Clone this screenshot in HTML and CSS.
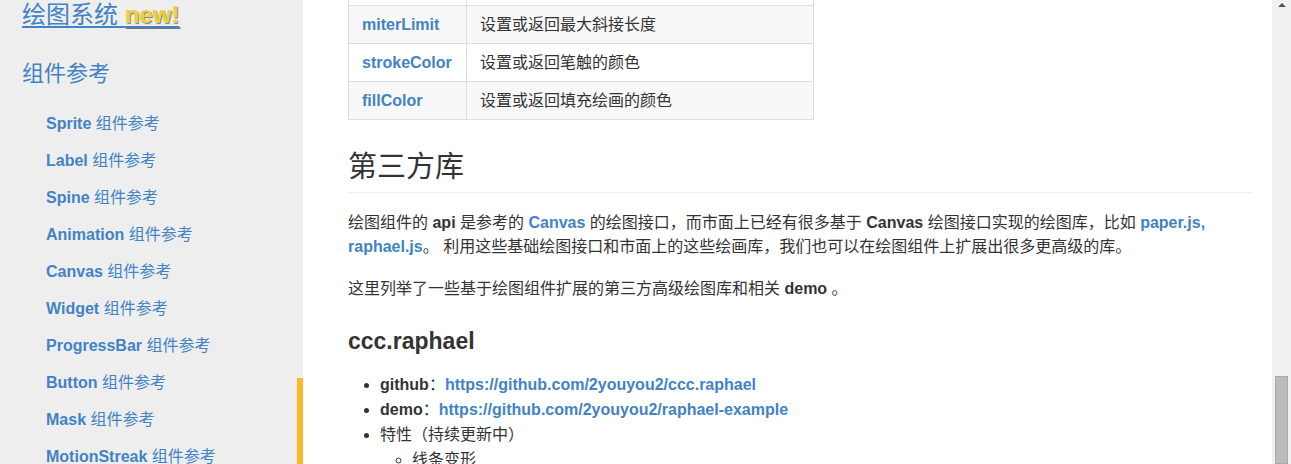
FILE: index.html
```html
<!DOCTYPE html>
<html lang="zh-CN">
<head>
    <meta charset="UTF-8">
    <title>绘图组件参考</title>
    <link rel="stylesheet" href="styles.css">
</head>
<body>

    <!-- Left navigation -->
    <nav class="sidebar">
        <a class="nav-title" href="#">绘图系统 <span class="new-badge">new!</span></a>
        <h2 class="nav-section">组件参考</h2>
        <ul class="nav-list">
            <li><a href="#"><b>Sprite</b> 组件参考</a></li>
            <li><a href="#"><b>Label</b> 组件参考</a></li>
            <li><a href="#"><b>Spine</b> 组件参考</a></li>
            <li><a href="#"><b>Animation</b> 组件参考</a></li>
            <li><a href="#"><b>Canvas</b> 组件参考</a></li>
            <li><a href="#"><b>Widget</b> 组件参考</a></li>
            <li><a href="#"><b>ProgressBar</b> 组件参考</a></li>
            <li><a href="#"><b>Button</b> 组件参考</a></li>
            <li><a href="#"><b>Mask</b> 组件参考</a></li>
            <li><a href="#"><b>MotionStreak</b> 组件参考</a></li>
        </ul>
        <div class="nav-marker"></div>
    </nav>

    <!-- Article (scrolled: the first table row sits above the fold) -->
    <main class="content">
        <table class="api-table">
            <tr><td></td><td></td></tr>
            <tr class="odd"><td><a href="#">miterLimit</a></td><td>设置或返回最大斜接长度</td></tr>
            <tr><td><a href="#">strokeColor</a></td><td>设置或返回笔触的颜色</td></tr>
            <tr class="odd"><td><a href="#">fillColor</a></td><td>设置或返回填充绘画的颜色</td></tr>
        </table>

        <h2 class="section-title">第三方库</h2>

        <p>绘图组件的 <b>api</b> 是参考的 <a href="#"><b>Canvas</b></a> 的绘图接口，而市面上已经有很多基于 <b>Canvas</b> 绘图接口实现的绘图库，比如 <a href="#"><b>paper.js</b></a><b class="link">,</b>
            <a href="#"><b>raphael.js</b></a>。 利用这些基础绘图接口和市面上的这些绘画库，我们也可以在绘图组件上扩展出很多更高级的库。</p>

        <p>这里列举了一些基于绘图组件扩展的第三方高级绘图库和相关 <b>demo</b> 。</p>

        <h3 class="lib-title">ccc.raphael</h3>

        <ul class="lib-list">
            <li><b>github</b>：<a href="#"><b>https://github.com/2youyou2/ccc.raphael</b></a></li>
            <li><b>demo</b>：<a href="#"><b>https://github.com/2youyou2/raphael-example</b></a></li>
            <li>特性（持续更新中）
                <ul>
                    <li>线条变形</li>
                </ul>
            </li>
        </ul>
    </main>

    <!-- Page scrollbar -->
    <div class="scrollbar">
        <div class="scroll-arrow"></div>
        <div class="scroll-thumb"></div>
    </div>

</body>
</html>
```

FILE: styles.css
```css
body {
    margin: 0;
    height: 464px;
    overflow: hidden;
    display: flex;
    font-family: 'Liberation Sans', 'Noto Sans CJK SC', sans-serif;
    color: #333;
    background: #fff;
}

a {
    color: #4183c4;
    text-decoration: none;
}

/* Sidebar */
.sidebar {
    width: 303px;
    flex-shrink: 0;
    background: #eeeeee;
    padding-left: 22px;
    box-sizing: border-box;
    position: relative;
}

.nav-title {
    display: inline-block;
    font-size: 24px;
    line-height: 30px;
    text-decoration: underline;
    text-underline-offset: 3px;
}

.new-badge {
    color: #ecd33a;
    font-weight: bold;
    text-shadow: 1px 1px 1px #777;
}

.nav-section {
    margin: 29px 0 16px;
    font-size: 22px;
    line-height: 30px;
    font-weight: normal;
    color: #4183c4;
}

.nav-list {
    list-style: none;
    margin: 0;
    padding-left: 24px;
}

.nav-list li {
    font-size: 16px;
    line-height: 37px;
}

.nav-marker {
    position: absolute;
    right: 0;
    top: 378px;
    width: 6px;
    height: 120px;
    background: #fbb829;
}

/* Main article */
.content {
    flex: 1;
    padding: 0 20px 0 45px;
    margin-top: -33px;
    font-size: 16px;
    line-height: 24px;
}

.api-table {
    border-collapse: collapse;
    width: 466px;
}

.api-table td {
    border: 1px solid #ddd;
    height: 38px;
    padding: 0 13px;
    box-sizing: border-box;
}

.api-table td:first-child {
    width: 118px;
    font-weight: bold;
}

.api-table tr.odd {
    background: #f8f8f8;
}

.section-title {
    margin: 30px 0 0;
    padding-bottom: 8px;
    font-family: 'Liberation Serif', serif;
    font-size: 29px;
    line-height: 34px;
    font-weight: normal;
    border-bottom: 1px solid #eeeeee;
}

.content p {
    margin: 18px 0;
}

.link {
    color: #4183c4;
}

.lib-title {
    margin: 25px 0 16px;
    font-size: 23px;
    line-height: 30px;
}

.lib-list {
    margin: 0;
    padding-left: 32px;
    line-height: 25px;
}

.lib-list ul {
    list-style: circle;
    padding-left: 32px;
}

/* Scrollbar */
.scrollbar {
    width: 19px;
    flex-shrink: 0;
    background: #f0f0f0;
    display: flex;
    flex-direction: column;
    align-items: center;
}

.scroll-arrow {
    margin-top: 3px;
    width: 0;
    height: 0;
    border-left: 4px solid transparent;
    border-right: 4px solid transparent;
    border-bottom: 4px solid #505050;
}

.scroll-thumb {
    margin-top: 369px;
    width: 11px;
    height: 120px;
    background: #bcbcbc;
    border: 1px solid #a9a9a9;
}
```
